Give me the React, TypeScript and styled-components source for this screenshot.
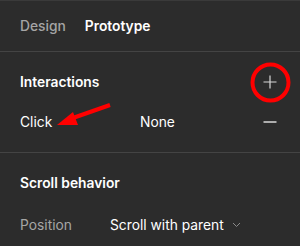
import styled, { createGlobalStyle } from "styled-components";

const GlobalStyle = createGlobalStyle`
  html, body {
    margin: 0;
    padding: 0;
    background: #2c2c2c;
  }
  body {
    font-family: Inter, "Noto Sans", sans-serif;
  }
`;

const Panel = styled.div`
  position: relative;
  width: 300px;
  height: 246px;
  background: #2c2c2c;
  border-top: 1px solid #3a3a3a;
  box-sizing: border-box;
  overflow: hidden;
  color: #fff;
  font-size: 13.8px;
`;

const Tabs = styled.div`
  display: flex;
  gap: 19px;
  height: 50px;
  align-items: center;
  padding: 0 20px;
  border-bottom: 1px solid #444;
`;

const Tab = styled.span<{ $active?: boolean }>`
  font-weight: ${(p) => (p.$active ? 600 : 500)};
  color: ${(p) => (p.$active ? "#fff" : "#a5a5a5")};
`;

const Section = styled.div<{ $divider?: boolean }>`
  padding: 10px 20px 10px;
  border-bottom: ${(p) => (p.$divider ? "1px solid #444" : "none")};
`;

const Header = styled.div`
  display: flex;
  align-items: center;
  justify-content: space-between;
  height: 40px;
`;

const Heading = styled.span`
  font-weight: 600;
  color: #fff;
`;

const Row = styled.div`
  display: grid;
  grid-template-columns: 120px 1fr 20px;
  align-items: center;
  height: 40px;
`;

const PropRow = styled.div`
  display: grid;
  grid-template-columns: 90px 1fr;
  align-items: center;
  height: 40px;
  margin-top: 2px;
`;

const Label = styled.span<{ $muted?: boolean }>`
  color: ${(p) => (p.$muted ? "#a5a5a5" : "#fff")};
`;

const Select = styled.span`
  display: flex;
  align-items: center;
  gap: 8px;
  color: #fff;
`;

const IconButton = styled.span`
  display: flex;
  align-items: center;
  justify-content: center;
  width: 20px;
  height: 20px;
`;

const Overlay = styled.svg`
  position: absolute;
  left: 0;
  top: 0;
  pointer-events: none;
`;

const Plus = () => (
  <svg width="14" height="14" viewBox="0 0 14 14">
    <path d="M7 0.5v13M0.5 7h13" stroke="#d8d8d8" strokeWidth="1.2" />
  </svg>
);

const Minus = () => (
  <svg width="14" height="14" viewBox="0 0 14 14">
    <path d="M0.5 7h13" stroke="#e6e6e6" strokeWidth="1.4" />
  </svg>
);

const Chevron = () => (
  <svg width="9" height="6" viewBox="0 0 9 6">
    <path d="M1 1l3.5 3.5L8 1" stroke="#8a8a8a" strokeWidth="1" fill="none" />
  </svg>
);

const App = () => {
  return (
    <>
      <GlobalStyle />
      <Panel>
        <Tabs>
          <Tab>Design</Tab>
          <Tab $active>Prototype</Tab>
        </Tabs>
        <Section $divider>
          <Header>
            <Heading>Interactions</Heading>
            <IconButton>
              <Plus />
            </IconButton>
          </Header>
          <Row>
            <Label>Click</Label>
            <Label>None</Label>
            <IconButton>
              <Minus />
            </IconButton>
          </Row>
        </Section>
        <Section>
          <Header>
            <Heading>Scroll behavior</Heading>
          </Header>
          <PropRow>
            <Label $muted>Position</Label>
            <Select>
              Scroll with parent
              <Chevron />
            </Select>
          </PropRow>
        </Section>
        {/* annotation drawn on top of the screenshot */}
        <Overlay width="300" height="246" viewBox="0 0 300 246">
          <circle cx="270.5" cy="81.5" r="18" stroke="#ff0000" strokeWidth="4" fill="none" />
          <path d="M110 104L70 118" stroke="#ff0000" strokeWidth="4" />
          <path d="M57 124L73 111L78 124Z" fill="#ff0000" />
        </Overlay>
      </Panel>
    </>
  );
};

export default App;
